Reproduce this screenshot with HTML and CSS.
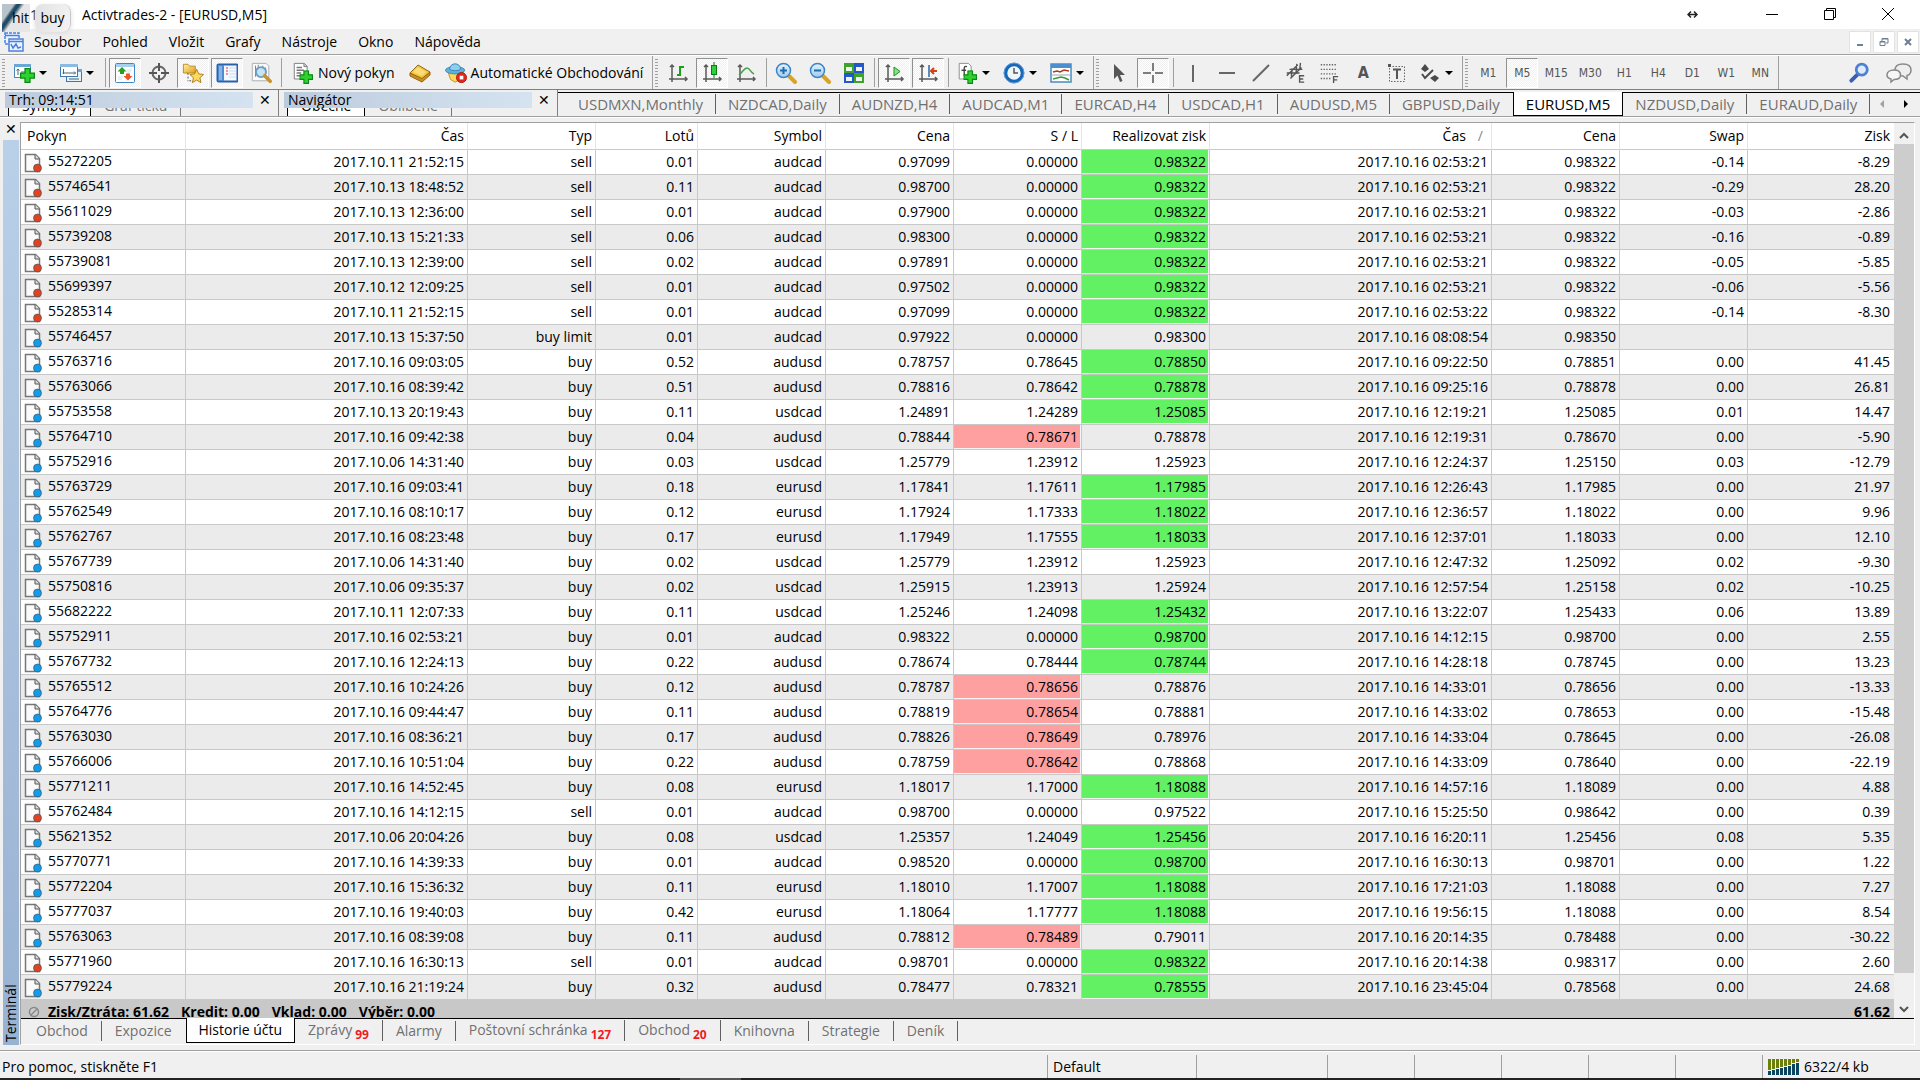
FILE: index.html
```html
<!DOCTYPE html>
<html lang="cs">
<head>
  <meta charset="UTF-8">
  <meta name="viewport" content="width=device-width, initial-scale=1.0">
  <title>Activtrades-2 - [EURUSD,M5]</title>
  <link rel="stylesheet" href="styles.css">
</head>
<body>
  <svg class="sprite" aria-hidden="true">
    <defs>
      <linearGradient id="gold" x1="0" y1="0" x2="1" y2="1"><stop offset="0" stop-color="#fff0a0"/><stop offset="1" stop-color="#e0a020"/></linearGradient>
      <linearGradient id="sky" x1="0" y1="0" x2="0" y2="1"><stop offset="0" stop-color="#e4f3fc"/><stop offset="1" stop-color="#9ccbee"/></linearGradient>
    </defs>
    <symbol id="i-plus" viewBox="0 0 12 12"><path d="M4 .5h4V4h3.500v4H8v3.500H4V8H.5V4H4z" fill="#2fd12f" stroke="#0a8a14"/></symbol>
    <symbol id="i-axes" viewBox="0 0 22 22"><path d="M5 3v17M2 17h18M3 5l2-2 2 2M18 15l2 2-2 2" fill="none" stroke="#5a5a5a" stroke-width="1.500"/></symbol>

    <symbol id="i-newchart" viewBox="0 0 22 22">
      <rect x="1.500" y="2.500" width="16" height="13" fill="#fff" stroke="#4a86b8"/><path d="M1 2h17v3H1z" fill="#6aa7d6"/>
      <path d="M5 7v6M3.500 8.500L5 7l1.500 1.500M8 10h5" stroke="#467" fill="none"/>
      <use href="#i-plus" x="7" y="6" width="15" height="15"/>
    </symbol>
    <symbol id="i-profiles" viewBox="0 0 22 22">
      <rect x="6.500" y="7.500" width="15" height="12" fill="#e8f2fa" stroke="#3f78ad"/><path d="M6 7h16v3H6z" fill="#6aa7d6"/>
      <rect x=".5" y="2.500" width="17" height="12" fill="#fff" stroke="#3f78ad"/><path d="M0 2h18v3H0z" fill="#8abce2"/>
      <path d="M3.500 7v5M2.500 11h13M14 9.500l1.500 1.500-1.500 1.500M9 17h10" stroke="#467" fill="none"/>
    </symbol>
    <symbol id="i-market" viewBox="0 0 22 22">
      <rect x="1.500" y="1.500" width="19" height="19" rx="1" fill="#fff" stroke="#3f87c2"/><path d="M2 2h18v3H2z" fill="#a6d0ee"/>
      <path d="M13 8h5M13 10h4M4 15h5M4 17h4" stroke="#cfe0ee"/>
      <path d="M8 5l4.500 4.500H10V12H6V9.500H3.500z" fill="#22a022"/><path d="M14 18.500L9.500 14H12v-2.500h4V14h2.500z" fill="#ee5522"/>
    </symbol>
    <symbol id="i-target" viewBox="0 0 22 22"><circle cx="11" cy="11" r="6.500" fill="none" stroke="#666" stroke-width="2"/><path d="M11 1v8M11 13v8M1 11h8M13 11h8" stroke="#555" stroke-width="2"/></symbol>
    <symbol id="i-folder" viewBox="0 0 24 24">
      <path d="M1.500 12V2.500h5l2 2h6V12z" fill="url(#gold)" stroke="#b98a1c"/><path d="M6.500 12v9M8 20.500h5" stroke="#444" stroke-dasharray="2 2" fill="none"/>
      <path d="M16 8l2.200 5 5.300.6-4 3.600 1.200 5.300-4.700-2.800-4.700 2.800 1.200-5.300-4-3.600 5.300-.6z" fill="#ffd95a" stroke="#a8781c"/>
    </symbol>
    <symbol id="i-panel" viewBox="0 0 22 22">
      <rect x="1.500" y="2.500" width="20" height="17" rx="1" fill="#f4f9ff" stroke="#2a62ae" stroke-width="2"/><path d="M2 3h6v16H2z" fill="#4d8ad0"/><path d="M3 4h3v14H3z" fill="#86b4e6"/>
      <path d="M10 6h2M10 9h2M10 12h2" stroke="#d33"/><path d="M13 6h7M13 9h7M13 12h7M13 15h7" stroke="#cdddee"/>
    </symbol>
    <symbol id="i-tester" viewBox="0 0 24 24">
      <path d="M2.500 1.500h15l3 3v16h-18z" fill="#fafafa" stroke="#aaa"/><path d="M6 4v12M9 3v5M14 4v4M17 6v4" stroke="#777"/>
      <circle cx="12" cy="11" r="5.500" fill="#b9dcf4" fill-opacity=".8" stroke="#6a9cc4" stroke-width="2"/><path d="M16 15l6 6" stroke="#c8942a" stroke-width="4" stroke-linecap="round"/>
    </symbol>
    <symbol id="i-order" viewBox="0 0 22 24">
      <path d="M1.500 1.500h11l3 3v14h-14z" fill="#fff" stroke="#777"/><path d="M12 1.500v3.500h3.500" fill="#ccc" stroke="#777"/><path d="M4 6h6M4 9h8M4 12h5M4 15h4" stroke="#777" stroke-width="1.500"/>
      <use href="#i-plus" x="7" y="9" width="15" height="15"/>
    </symbol>
    <symbol id="i-book" viewBox="0 0 22 22">
      <path d="M1 11L9 3l12 7-8 9.500z" fill="#f2c545" stroke="#94650f"/><path d="M1 11l12 5.500 8-6.500v3l-8 7L1 14z" fill="#c98f22" stroke="#94650f"/><path d="M9 5l8 5-4 4-9-4z" fill="#ffe58a" opacity=".7"/>
    </symbol>
    <symbol id="i-robot" viewBox="0 0 24 24">
      <path d="M3 10h17l-3 9-6 3-5-3z" fill="#ffd75e" stroke="#c1901e"/><ellipse cx="11" cy="9" rx="10.500" ry="4" fill="#5fb1dd" stroke="#3785b5"/><path d="M5 8c0-8 12-8 12 0-2 2-10 2-12 0z" fill="#8dcdef" stroke="#3785b5"/>
      <circle cx="18" cy="17" r="5.500" fill="#e02818" stroke="#a81a10"/><rect x="16" y="15" width="4" height="4" fill="#fff"/>
    </symbol>
    <symbol id="i-bars" viewBox="0 0 22 22"><use href="#i-axes"/><path d="M13 4v10M13 5h4M10 13h3" stroke="#18a018" stroke-width="2" fill="none"/></symbol>
    <symbol id="i-candle" viewBox="0 0 22 22"><use href="#i-axes"/><path d="M13 0v16" stroke="#0b7a18"/><rect x="10.500" y="3.500" width="5" height="9" fill="#2fcf3a" stroke="#0b7a18"/></symbol>
    <symbol id="i-line" viewBox="0 0 22 22"><use href="#i-axes"/><path d="M4 13C8 10 9 6 12 6s3 4 7 6" stroke="#46a046" stroke-width="1.500" fill="none"/></symbol>
    <symbol id="i-zoomin" viewBox="0 0 22 22">
      <path d="M14 14l6 6" stroke="#d9a423" stroke-width="4" stroke-linecap="round"/><circle cx="8.500" cy="8.500" r="7" fill="url(#sky)" stroke="#3d84c6" stroke-width="1.500"/><path d="M5 8.500h7M8.500 5v7" stroke="#236aa8" stroke-width="2"/>
    </symbol>
    <symbol id="i-zoomout" viewBox="0 0 22 22">
      <path d="M14 14l6 6" stroke="#d9a423" stroke-width="4" stroke-linecap="round"/><circle cx="8.500" cy="8.500" r="7" fill="url(#sky)" stroke="#3d84c6" stroke-width="1.500"/><path d="M5 8.500h7" stroke="#236aa8" stroke-width="2"/>
    </symbol>
    <symbol id="i-tile" viewBox="0 0 22 22">
      <path d="M1 1h10v10H1zM11 11h10v10H11z" fill="#3fa32a"/><path d="M11 1h10v10H11zM1 11h10v10H1z" fill="#2458c8"/>
      <path d="M3 5h6v4H3zM13 5h6v4h-6zM3 15h6v4H3zM13 15h6v4h-6z" fill="#eef5f0"/>
    </symbol>
    <symbol id="i-scroll" viewBox="0 0 22 22"><use href="#i-axes"/><path d="M11 5l6 4.500-6 4.500z" fill="#8ee08e" stroke="#189018"/></symbol>
    <symbol id="i-shift" viewBox="0 0 22 22"><use href="#i-axes"/><path d="M12 3v12" stroke="#2a6aa0" stroke-width="1.500"/><path d="M20 9h-5M17 6l-3 3 3 3" stroke="#d04414" stroke-width="2" fill="none"/></symbol>
    <symbol id="i-indicator" viewBox="0 0 22 24">
      <path d="M2.500 1.500h10l3 3v14h-13z" fill="#fff" stroke="#888"/><path d="M11 5c-4-1-3 2-3 10M5 9h5" stroke="#444" stroke-width="1.500" fill="none"/>
      <use href="#i-plus" x="7" y="9" width="15" height="15"/>
    </symbol>
    <symbol id="i-clock" viewBox="0 0 22 22"><circle cx="11" cy="11" r="8.500" fill="#eef5fb" stroke="#1a66b8" stroke-width="3.500"/><circle cx="11" cy="11" r="10" fill="none" stroke="#5ba0e0"/><path d="M11 6v5h4" stroke="#555" stroke-width="1.500" fill="none"/></symbol>
    <symbol id="i-template" viewBox="0 0 22 22">
      <rect x="1" y="2" width="20" height="18" fill="#fff" stroke="#4a8ac4" stroke-width="1.500"/><path d="M1 2h20v4H1z" fill="#4a8fd0"/><path d="M2 13h18" stroke="#8ab"/>
      <path d="M3 10l4-1 3 1 4-2 5 1" stroke="#b03a1a" stroke-width="1.500" fill="none"/><path d="M3 17l4-1 4-1 4 1 4 2" stroke="#3a9a3a" stroke-width="1.500" fill="none"/>
    </symbol>
    <symbol id="i-cursor" viewBox="0 0 22 22"><path d="M6 2v15l3.500-3.500L12 20l2.500-1-2.500-6h5z" fill="#555"/></symbol>
    <symbol id="i-cross" viewBox="0 0 22 22"><path d="M11 1v8M11 13v8M1 11h8M13 11h8" stroke="#555" stroke-width="1.500"/></symbol>
    <symbol id="i-vline" viewBox="0 0 22 22"><path d="M11 3v17" stroke="#666" stroke-width="2"/></symbol>
    <symbol id="i-hline" viewBox="0 0 22 22"><path d="M3 11h16" stroke="#666" stroke-width="2"/></symbol>
    <symbol id="i-trend" viewBox="0 0 22 22"><path d="M3 19L19 3" stroke="#666" stroke-width="2"/></symbol>
    <symbol id="i-channel" viewBox="0 0 22 24"><path d="M2 15L14 3M6 18L18 6M2 12h14M5 8h14M7 16l1-9M12 13l1-11M16 9l1-8" stroke="#555" stroke-width="1.500"/><path d="M21 15h-5v7h5M16 18.500h4" stroke="#555" stroke-width="1.500" fill="none"/></symbol>
    <symbol id="i-fibo" viewBox="0 0 22 24"><path d="M2 3h18M2 8h18M2 13h18M2 18h12" stroke="#666" stroke-dasharray="1.500 1.500" stroke-width="1.500"/><path d="M16 23v-7h5M16 19.500h4" stroke="#555" stroke-width="1.500" fill="none"/></symbol>
    <symbol id="i-label" viewBox="0 0 22 22"><rect x="3.500" y="4.500" width="15" height="15" fill="none" stroke="#666" stroke-dasharray="1.500 1.500"/><path d="M7 7.500h8M11 7.500V17" stroke="#555" stroke-width="2"/><path d="M2 2h3v3H2z" fill="#555"/></symbol>
    <symbol id="i-shapes" viewBox="0 0 22 22"><path d="M6 2l4 5-4 3-4-3zM16 13l4 3-4 4-5-4z" fill="#4a4a4a"/><path d="M3 12l3 4 8-8" stroke="#4a4a4a" stroke-width="2" fill="none"/></symbol>
    <symbol id="i-search" viewBox="0 0 20 20"><path d="M9 11l-6 6" stroke="#3a5fae" stroke-width="3.500" stroke-linecap="round"/><circle cx="12.500" cy="7" r="5" fill="#dcecfa" stroke="#4f7fd0" stroke-width="2.500"/></symbol>
    <symbol id="i-chat" viewBox="0 0 26 22"><path d="M17 2c5 0 8 2 8 6s-2 5-4 5.500V17l-4-3c-5 0-8-2-8-6s3-6 8-6z" fill="#eee" stroke="#888" stroke-width="1.500"/><path d="M8 8c4 0 6.500 2 6.500 5S12 17.500 8 17.500L5 20v-3c-2-.5-4-2-4-4 0-3 3-5 7-5z" fill="#f6f6f6" stroke="#888" stroke-width="1.500"/></symbol>
    <symbol id="i-doc" viewBox="0 0 18 20"><path d="M1.500 1.500h10l4 4v13h-14z" fill="#fafafa" stroke="#777" stroke-width="1.500"/><path d="M11 1.500V6h4.500" fill="#ddd" stroke="#555"/><circle cx="13.500" cy="15" r="4" fill="currentColor" stroke="#33506a" stroke-opacity=".6"/></symbol>
    <symbol id="i-app" viewBox="0 0 20 20"><g fill="#eaf3ff" stroke="#4a80dc" stroke-width="1.500"><rect x="1" y="1" width="14" height="11" stroke-dasharray="3 1"/><path d="M1 3.500h14"/><rect x="5" y="7" width="14" height="12"/><path d="M5 9.500h14M7 12l2 4 3-4 2 4 3-1" fill="none"/></g></symbol>
  </svg>

  <header class="titlebar">
    <div class="title"><span class="mark">1</span><span>Activtrades-2 - [EURUSD,M5]</span></div>
    <span class="drag-tip tip-hit">hit</span>
    <span class="drag-tip tip-buy">buy</span>
    <div class="window-buttons">
      <svg class="resize" viewBox="0 0 11 9"><path d="M1 4.500h9M4 1.500l-3 3 3 3M7 1.500l3 3-3 3" fill="none" stroke="#222" stroke-width="1.500"/></svg>
      <button aria-label="Minimalizovat"><svg viewBox="0 0 12 12"><path d="M0 6.500h12" stroke="#000"/></svg></button>
      <button aria-label="Obnovit"><svg viewBox="0 0 12 12"><path d="M.5 2.500h9v9h-9zM2.500 2.500v-2h9v9h-2" fill="none" stroke="#000"/></svg></button>
      <button aria-label="Zavřít"><svg viewBox="0 0 12 12"><path d="M0 0l12 12M12 0L0 12" stroke="#000"/></svg></button>
    </div>
  </header>

  <nav class="menubar">
    <svg class="app-icon"><use href="#i-app"/></svg>
    <button>Soubor</button>
    <button>Pohled</button>
    <button>Vložit</button>
    <button>Grafy</button>
    <button>Nástroje</button>
    <button>Okno</button>
    <button>Nápověda</button>
    <div class="mdi-buttons">
      <button aria-label="Minimalizovat graf"><svg viewBox="0 0 10 10"><path d="M2 8h6" stroke="#6d7f92" stroke-width="2"/></svg></button>
      <button aria-label="Obnovit graf"><svg viewBox="0 0 10 10"><path d="M1 4.500h5v4H1zM3 4V1.500h6V6H7M3 2h6M1 5h5" fill="none" stroke="#6d7f92"/></svg></button>
      <button aria-label="Zavřít graf"><svg viewBox="0 0 10 10"><path d="M2 2l6 6M8 2L2 8" stroke="#6d7f92" stroke-width="2"/></svg></button>
    </div>
  </nav>

  <div class="toolbar">
    <div class="group">
      <i class="grip"></i>
      <button class="drop" aria-label="Nový graf"><svg><use href="#i-newchart"/></svg></button>
      <button class="drop" aria-label="Profily"><svg><use href="#i-profiles"/></svg></button>
      <i class="sep"></i>
      <button class="on" aria-label="Sledování trhu"><svg><use href="#i-market"/></svg></button>
      <button aria-label="Datové okno"><svg><use href="#i-target"/></svg></button>
      <button class="on" aria-label="Navigátor"><svg><use href="#i-folder"/></svg></button>
      <button class="on" aria-label="Terminál"><svg><use href="#i-panel"/></svg></button>
      <button aria-label="Tester strategií"><svg><use href="#i-tester"/></svg></button>
      <i class="sep"></i>
      <button class="wide"><svg><use href="#i-order"/></svg>Nový pokyn</button>
      <button aria-label="MetaEditor"><svg><use href="#i-book"/></svg></button>
      <button class="wide"><svg><use href="#i-robot"/></svg>Automatické Obchodování</button>
    </div>
    <div class="group">
      <i class="grip"></i>
      <button aria-label="Sloupcový graf"><svg><use href="#i-bars"/></svg></button>
      <button class="on" aria-label="Svíčky"><svg><use href="#i-candle"/></svg></button>
      <button aria-label="Čárový graf"><svg><use href="#i-line"/></svg></button>
      <i class="sep"></i>
      <button aria-label="Přiblížit"><svg><use href="#i-zoomin"/></svg></button>
      <button aria-label="Oddálit"><svg><use href="#i-zoomout"/></svg></button>
      <button aria-label="Uspořádat okna"><svg><use href="#i-tile"/></svg></button>
      <i class="sep"></i>
      <button class="on" aria-label="Automatický posun"><svg><use href="#i-scroll"/></svg></button>
      <button class="on" aria-label="Odsazení grafu"><svg><use href="#i-shift"/></svg></button>
      <i class="sep"></i>
      <button class="drop" aria-label="Indikátory"><svg><use href="#i-indicator"/></svg></button>
      <button class="drop" aria-label="Periody"><svg><use href="#i-clock"/></svg></button>
      <button class="drop" aria-label="Šablony"><svg><use href="#i-template"/></svg></button>
    </div>
    <div class="group">
      <i class="grip"></i>
      <button aria-label="Kurzor"><svg><use href="#i-cursor"/></svg></button>
      <button class="on" aria-label="Zaměřovač"><svg><use href="#i-cross"/></svg></button>
      <i class="sep"></i>
      <button aria-label="Svislá čára"><svg><use href="#i-vline"/></svg></button>
      <button aria-label="Vodorovná čára"><svg><use href="#i-hline"/></svg></button>
      <button aria-label="Trendová čára"><svg><use href="#i-trend"/></svg></button>
      <button aria-label="Kanál"><svg><use href="#i-channel"/></svg></button>
      <button aria-label="Fibonacci"><svg><use href="#i-fibo"/></svg></button>
      <button class="letter" aria-label="Text">A</button>
      <button aria-label="Textový popisek"><svg><use href="#i-label"/></svg></button>
      <button class="drop" aria-label="Šipky"><svg><use href="#i-shapes"/></svg></button>
    </div>
    <div class="group periods">
      <i class="grip"></i>
      <button>M1</button>
      <button class="on">M5</button>
      <button>M15</button>
      <button>M30</button>
      <button>H1</button>
      <button>H4</button>
      <button>D1</button>
      <button>W1</button>
      <button>MN</button>
    </div>
    <div class="tools-right">
      <button aria-label="Hledat"><svg><use href="#i-search"/></svg></button>
      <button aria-label="Zprávy"><svg class="chat"><use href="#i-chat"/></svg></button>
    </div>
  </div>

  <div class="docks">
    <section class="dock">
      <div class="dock-head"><h2>Trh: 09:14:51</h2><button aria-label="Zavřít Trh">✕</button></div>
      <div class="dock-tabs"><span class="active">Symboly</span><span>Graf ticků</span></div>
    </section>
    <section class="dock">
      <div class="dock-head"><h2>Navigátor</h2><button aria-label="Zavřít Navigátor">✕</button></div>
      <div class="dock-tabs"><span class="active">Obecné</span><span>Oblíbené</span></div>
    </section>
    <nav class="tabs chart-tabs">
      <button>USDMXN,Monthly</button>
      <button>NZDCAD,Daily</button>
      <button>AUDNZD,H4</button>
      <button>AUDCAD,M1</button>
      <button>EURCAD,H4</button>
      <button>USDCAD,H1</button>
      <button>AUDUSD,M5</button>
      <button class="before">GBPUSD,Daily</button>
      <button class="active">EURUSD,M5</button>
      <button>NZDUSD,Daily</button>
      <button>EURAUD,Daily</button>
      <div class="tab-arrows">
        <button class="left off" aria-label="Předchozí karty"></button>
        <button class="right" aria-label="Další karty"></button>
      </div>
    </nav>
  </div>

  <main class="terminal">
    <div class="side">
      <button aria-label="Zavřít Terminál">✕</button>
      <h2>Terminál</h2>
    </div>
    <div class="pane">
      <div class="history">
        <div class="rows">
          <table>
            <colgroup>
              <col class="c-order"><col class="c-time"><col class="c-num"><col class="c-lots"><col class="c-num"><col class="c-num">
              <col class="c-num"><col class="c-num"><col class="c-time"><col class="c-num"><col class="c-num"><col>
            </colgroup>
            <thead>
              <tr><th>Pokyn</th><th>Čas</th><th>Typ</th><th>Lotů</th><th>Symbol</th><th>Cena</th><th>S / L</th><th>Realizovat zisk</th><th>Čas<span class="sort">∕</span></th><th>Cena</th><th>Swap</th><th>Zisk</th></tr>
            </thead>
            <tbody id="orders"></tbody>
            <tfoot>
              <tr><td colspan="11"><div class="total"><svg class="none" viewBox="0 0 12 12"><circle cx="6" cy="6" r="4.500" fill="#ccc" stroke="#888" stroke-width="1.500"/><path d="M3 9l6-6" stroke="#888" stroke-width="1.500"/></svg><span>Zisk/Ztráta: 61.62</span><span>Kredit: 0.00</span><span>Vklad: 0.00</span><span>Výběr: 0.00</span></div></td><td>61.62</td></tr>
            </tfoot>
          </table>
        </div>
        <div class="scrollbar">
          <button aria-label="Nahoru"><svg viewBox="0 0 10 7"><path d="M1 6l4-4 4 4" fill="none" stroke="#555" stroke-width="2"/></svg></button>
          <div class="thumb"></div>
          <button aria-label="Dolů"><svg viewBox="0 0 10 7"><path d="M1 1l4 4 4-4" fill="none" stroke="#555" stroke-width="2"/></svg></button>
        </div>
      </div>
      <nav class="tabs">
        <button>Obchod</button>
        <button class="before">Expozice</button>
        <button class="active">Historie účtu</button>
        <button>Zprávy<sub>99</sub></button>
        <button>Alarmy</button>
        <button>Poštovní schránka<sub>127</sub></button>
        <button>Obchod<sub>20</sub></button>
        <button>Knihovna</button>
        <button>Strategie</button>
        <button>Deník</button>
      </nav>
    </div>
  </main>

  <footer class="statusbar">
    <span class="help">Pro pomoc, stiskněte F1</span>
    <span class="s-profile">Default</span>
    <span class="s-wide"></span>
    <span class="s-cell"></span>
    <span class="s-cell"></span>
    <span class="s-cell"></span>
    <span class="s-cell"></span>
    <span class="s-cell"></span>
    <span class="s-net">
      <svg viewBox="0 0 32 16"><path d="M0 0h3v11H0zM4 0h3v10H4zM8 0h3v9H8zM12 0h3v8h-3zM16 0h3v7h-3zM20 0h3v6h-3zM24 0h3v4h-3zM28 0h3v3h-3z" fill="#6b7f0a"/><path d="M0 12h3v4H0zM4 11h3v5H4zM8 10h3v6H8zM12 9h3v7h-3zM16 8h3v8h-3zM20 7h3v9h-3zM24 5h3v11h-3zM28 4h3v12h-3z" fill="#0c4560"/></svg>
      6322/4 kb
    </span>
  </footer>
  <div class="taskbar"><i></i></div>

  <script src="orders.js"></script>
</body>
</html>
```
FILE: orders.js
```js
// order | open time | type | lots | symbol | price | S/L | T/P | close time | close price | swap | profit | hit (tp, sl)
const orders = `
55272205|2017.10.11 21:52:15|sell|0.01|audcad|0.97099|0.00000|0.98322|2017.10.16 02:53:21|0.98322|-0.14|-8.29|tp
55746541|2017.10.13 18:48:52|sell|0.11|audcad|0.98700|0.00000|0.98322|2017.10.16 02:53:21|0.98322|-0.29|28.20|tp
55611029|2017.10.13 12:36:00|sell|0.01|audcad|0.97900|0.00000|0.98322|2017.10.16 02:53:21|0.98322|-0.03|-2.86|tp
55739208|2017.10.13 15:21:33|sell|0.06|audcad|0.98300|0.00000|0.98322|2017.10.16 02:53:21|0.98322|-0.16|-0.89|tp
55739081|2017.10.13 12:39:00|sell|0.02|audcad|0.97891|0.00000|0.98322|2017.10.16 02:53:21|0.98322|-0.05|-5.85|tp
55699397|2017.10.12 12:09:25|sell|0.01|audcad|0.97502|0.00000|0.98322|2017.10.16 02:53:21|0.98322|-0.06|-5.56|tp
55285314|2017.10.11 21:52:15|sell|0.01|audcad|0.97099|0.00000|0.98322|2017.10.16 02:53:22|0.98322|-0.14|-8.30|tp
55746457|2017.10.13 15:37:50|buy limit|0.01|audcad|0.97922|0.00000|0.98300|2017.10.16 08:08:54|0.98350|||
55763716|2017.10.16 09:03:05|buy|0.52|audusd|0.78757|0.78645|0.78850|2017.10.16 09:22:50|0.78851|0.00|41.45|tp
55763066|2017.10.16 08:39:42|buy|0.51|audusd|0.78816|0.78642|0.78878|2017.10.16 09:25:16|0.78878|0.00|26.81|tp
55753558|2017.10.13 20:19:43|buy|0.11|usdcad|1.24891|1.24289|1.25085|2017.10.16 12:19:21|1.25085|0.01|14.47|tp
55764710|2017.10.16 09:42:38|buy|0.04|audusd|0.78844|0.78671|0.78878|2017.10.16 12:19:31|0.78670|0.00|-5.90|sl
55752916|2017.10.06 14:31:40|buy|0.03|usdcad|1.25779|1.23912|1.25923|2017.10.16 12:24:37|1.25150|0.03|-12.79|
55763729|2017.10.16 09:03:41|buy|0.18|eurusd|1.17841|1.17611|1.17985|2017.10.16 12:26:43|1.17985|0.00|21.97|tp
55762549|2017.10.16 08:10:17|buy|0.12|eurusd|1.17924|1.17333|1.18022|2017.10.16 12:36:57|1.18022|0.00|9.96|tp
55762767|2017.10.16 08:23:48|buy|0.17|eurusd|1.17949|1.17555|1.18033|2017.10.16 12:37:01|1.18033|0.00|12.10|tp
55767739|2017.10.06 14:31:40|buy|0.02|usdcad|1.25779|1.23912|1.25923|2017.10.16 12:47:32|1.25092|0.02|-9.30|
55750816|2017.10.06 09:35:37|buy|0.02|usdcad|1.25915|1.23913|1.25924|2017.10.16 12:57:54|1.25158|0.02|-10.25|
55682222|2017.10.11 12:07:33|buy|0.11|usdcad|1.25246|1.24098|1.25432|2017.10.16 13:22:07|1.25433|0.06|13.89|tp
55752911|2017.10.16 02:53:21|buy|0.01|audcad|0.98322|0.00000|0.98700|2017.10.16 14:12:15|0.98700|0.00|2.55|tp
55767732|2017.10.16 12:24:13|buy|0.22|audusd|0.78674|0.78444|0.78744|2017.10.16 14:28:18|0.78745|0.00|13.23|tp
55765512|2017.10.16 10:24:26|buy|0.12|audusd|0.78787|0.78656|0.78876|2017.10.16 14:33:01|0.78656|0.00|-13.33|sl
55764776|2017.10.16 09:44:47|buy|0.11|audusd|0.78819|0.78654|0.78881|2017.10.16 14:33:02|0.78653|0.00|-15.48|sl
55763030|2017.10.16 08:36:21|buy|0.17|audusd|0.78826|0.78649|0.78976|2017.10.16 14:33:04|0.78645|0.00|-26.08|sl
55766006|2017.10.16 10:51:04|buy|0.22|audusd|0.78759|0.78642|0.78868|2017.10.16 14:33:09|0.78640|0.00|-22.19|sl
55771211|2017.10.16 14:52:45|buy|0.08|eurusd|1.18017|1.17000|1.18088|2017.10.16 14:57:16|1.18089|0.00|4.88|tp
55762484|2017.10.16 14:12:15|sell|0.01|audcad|0.98700|0.00000|0.97522|2017.10.16 15:25:50|0.98642|0.00|0.39|
55621352|2017.10.06 20:04:26|buy|0.08|usdcad|1.25357|1.24049|1.25456|2017.10.16 16:20:11|1.25456|0.08|5.35|tp
55770771|2017.10.16 14:39:33|buy|0.01|audcad|0.98520|0.00000|0.98700|2017.10.16 16:30:13|0.98701|0.00|1.22|tp
55772204|2017.10.16 15:36:32|buy|0.11|eurusd|1.18010|1.17007|1.18088|2017.10.16 17:21:03|1.18088|0.00|7.27|tp
55777037|2017.10.16 19:40:03|buy|0.42|eurusd|1.18064|1.17777|1.18088|2017.10.16 19:56:15|1.18088|0.00|8.54|tp
55763063|2017.10.16 08:39:08|buy|0.11|audusd|0.78812|0.78489|0.79011|2017.10.16 20:14:35|0.78488|0.00|-30.22|sl
55771960|2017.10.16 16:30:13|sell|0.01|audcad|0.98701|0.00000|0.98322|2017.10.16 20:14:38|0.98317|0.00|2.60|tp
55779224|2017.10.16 21:19:24|buy|0.32|audusd|0.78477|0.78321|0.78555|2017.10.16 23:45:04|0.78568|0.00|24.68|tp
`.trim().split("\n").map(line => line.split("|"));

document.getElementById("orders").innerHTML = orders.map(row => {
  const hit = row[12];
  const side = row[2] === "sell" ? "sell" : "buy";
  return "<tr>" + row.slice(0, 12).map((value, i) => {
    if (i === 0) return `<td><svg class="doc ${side}"><use href="#i-doc"/></svg>${value}</td>`;
    if (i === 6 && hit === "sl") return `<td class="sl">${value}</td>`;
    if (i === 7 && hit === "tp") return `<td class="tp">${value}</td>`;
    return `<td>${value}</td>`;
  }).join("") + "</tr>";
}).join("");
```
FILE: styles.css
```css
* {
  box-sizing: border-box;
}
body {
  margin: 0;
  height: 100vh;
  display: flex;
  flex-direction: column;
  overflow: hidden;
  background: #f0f0f0;
  color: #000;
  font: 14px/20px "Open Sans", "Noto Sans", sans-serif;
}
button {
  margin: 0;
  padding: 0;
  border: none;
  background: none;
  color: inherit;
  font: inherit;
  white-space: nowrap;
}
h2 {
  margin: 0;
  font-size: 14px;
  font-weight: normal;
}
.sprite {
  position: absolute;
  width: 0;
  height: 0;
}

/* title bar */
.titlebar {
  position: relative;
  display: flex;
  justify-content: space-between;
  height: 29px;
  background: #fff;
}
.title {
  display: flex;
  gap: 44px;
  padding: 5px 0 0 30px;
}
.drag-tip {
  position: absolute;
  top: 4px;
  height: 28px;
  padding-top: 4px;
  text-align: center;
}
.tip-hit {
  left: 2px;
  width: 28px;
  padding-left: 9px;
  background: linear-gradient(125deg, #b9c4ca 0 25%, #234a66 32% 38%, #e6e6e6 48%);
}
.tip-buy {
  left: 35px;
  width: 36px;
  border-radius: 8px;
  background: linear-gradient(100deg, #e2e2e2, #f4f2f2);
  box-shadow: 0 2px 5px #ddd;
  border-right: 1px solid #c8c8c8;
}
.window-buttons {
  display: flex;
  align-items: center;
  padding-right: 3px;
}
.window-buttons button {
  width: 58px;
  height: 28px;
}
.window-buttons svg {
  width: 12px;
  height: 12px;
}
.window-buttons .resize {
  width: 11px;
  height: 9px;
  margin-right: 45px;
}

/* menu */
.menubar {
  display: flex;
  align-items: center;
  height: 26px;
  padding-left: 4px;
  border-bottom: 1px solid #a0a0a0;
}
.app-icon {
  width: 20px;
  height: 20px;
}
.menubar > button {
  padding: 0 11px 0 10px;
}
.mdi-buttons {
  display: flex;
  gap: 2px;
  margin-left: auto;
  padding-right: 1px;
}
.mdi-buttons button {
  width: 22px;
  height: 22px;
  border: 1px solid #e3e3e3;
  background: #fff;
}
.mdi-buttons svg {
  width: 10px;
  height: 10px;
}

/* toolbar */
.toolbar {
  display: flex;
  height: 35px;
  border-top: 1px solid #fff;
  border-bottom: 1px solid #808080;
}
.group {
  display: flex;
  align-items: center;
  gap: 2px;
  padding: 0 2px;
  border-right: 1px solid #a0a0a0;
}
.grip {
  width: 3px;
  height: 28px;
  margin-right: 2px;
  background: repeating-linear-gradient(#a0a0a0 0 1px, #f0f0f0 1px 3px);
}
.sep {
  width: 1px;
  height: 29px;
  margin: 0 1px 0 2px;
  background: #a0a0a0;
}
.toolbar button {
  display: flex;
  align-items: center;
  justify-content: center;
  width: 32px;
  height: 30px;
  border: 1px solid transparent;
}
.toolbar svg {
  flex: none;
  width: 22px;
  height: 22px;
}
.toolbar .on {
  border-color: #909090 #fff #fff #909090;
  background: repeating-conic-gradient(#f0f0f0 0 25%, #fff 0 50%) 0 0 / 2px 2px;
}
.toolbar .drop {
  width: 45px;
  justify-content: flex-start;
  gap: 4px;
  padding-left: 3px;
}
.drop::after {
  content: "";
  border: 4px solid transparent;
  border-top-color: #000;
  border-bottom: none;
}
.toolbar .wide {
  width: auto;
  gap: 4px;
  padding: 0 6px;
}
.toolbar .letter {
  color: #555;
  font: bold 16px "DejaVu Sans Condensed", sans-serif;
}
.periods button {
  color: #555;
  font: 12px "DejaVu Sans Condensed", "DejaVu Sans", sans-serif;
}
.tools-right {
  display: flex;
  align-items: center;
  gap: 8px;
  margin-left: auto;
  padding-right: 5px;
}
.toolbar .chat {
  width: 28px;
}

/* market watch, navigator, chart tabs */
.docks {
  display: flex;
  height: 27px;
  border-bottom: 1px solid #a0a0a0;
}
.dock {
  width: 279px;
  padding: 2px 1px 0 5px;
  border-right: 1px solid #808080;
  overflow: hidden;
}
.dock-head {
  display: flex;
  height: 16px;
}
.dock-head h2 {
  flex: 1;
  padding-left: 4px;
  line-height: 16px;
  background: linear-gradient(90deg, #bccbdc, #d5e3f1);
}
.dock-head button {
  width: 24px;
  line-height: 16px;
}
.dock-tabs {
  display: flex;
  align-items: flex-end;
  height: 8px;
  padding-left: 3px;
  overflow: hidden;
  color: #777;
}
.dock-tabs span {
  padding: 0 13px;
  border-right: 1px solid #777;
}
.dock-tabs .active {
  border: solid #000;
  border-width: 0 1px;
  background: #fff;
  color: #000;
}
.tabs {
  display: flex;
  align-items: center;
  height: 26px;
  padding: 0 0 2px 2px;
  border-top: 1px solid #000;
  color: #707070;
}
.tabs > button {
  padding: 0 13px;
  border-right: 1px solid #606060;
}
.tabs > .before {
  border-right-color: transparent;
}
.tabs > .active {
  align-self: flex-start;
  height: 25px;
  margin-top: -1px;
  padding: 0 12px;
  border: solid #000;
  border-width: 0 1px 1px;
  background: #fff;
  color: #000;
}
.chart-tabs {
  flex: 1;
  height: 24px;
  margin-top: 2px;
  padding-left: 8px;
  font-size: 15px;
}
.chart-tabs > button {
  padding: 0 12px;
}
.chart-tabs > .active {
  height: 24px;
}
.tab-arrows {
  display: flex;
  gap: 20px;
  margin-left: auto;
  padding-right: 12px;
}
.tab-arrows button {
  border: 4px solid transparent;
}
.tab-arrows .left {
  border-left: none;
  border-right-color: #000;
}
.tab-arrows .right {
  border-right: none;
  border-left-color: #000;
}
.tab-arrows .off {
  border-right-color: #a0a0a0;
}

/* terminal */
.terminal {
  flex: 1;
  display: flex;
  min-height: 0;
  padding: 0 5px 5px 3px;
  border-top: 1px solid #fff;
}
.side {
  display: flex;
  flex-direction: column;
  width: 17px;
  padding-right: 1px;
}
.side button {
  height: 22px;
}
.side h2 {
  flex: 1;
  padding-top: 3px;
  line-height: 16px;
  writing-mode: vertical-rl;
  transform: rotate(180deg);
  background: linear-gradient(#98b2d2, #bacfe8);
}
.pane {
  flex: 1;
  display: flex;
  flex-direction: column;
  min-width: 0;
  margin-top: 4px;
  border: 1px solid #fff;
  border-top-color: #a0a0a0;
  border-left-color: #a0a0a0;
}
.history {
  flex: 1;
  display: flex;
  min-height: 0;
}
.rows {
  flex: 1;
  overflow: hidden;
  background: #fff;
}
table {
  width: 100%;
  table-layout: fixed;
  border-spacing: 0;
}
.c-order { width: 165px; }
.c-time { width: 282px; }
.c-num { width: 128px; }
.c-lots { width: 102px; }
th, td {
  height: 25px;
  padding: 0 3px;
  border: solid #c8c8c8;
  border-width: 0 1px 1px 0;
  text-align: right;
  white-space: nowrap;
}
th {
  height: 27px;
  border-right-color: #e5e5e5;
  font-weight: normal;
}
th:first-child {
  padding-left: 6px;
  text-align: left;
}
td:first-child {
  text-align: left;
}
td:last-child, th:last-child {
  padding-right: 4px;
  border-right: none;
}
tbody tr:nth-child(even) {
  background: #ebebeb;
}
.sort {
  margin: 0 5px 0 12px;
  color: #888;
}
.doc {
  width: 18px;
  height: 20px;
  margin-right: 6px;
  vertical-align: middle;
}
.buy { color: #149be8; }
.sell { color: #e2431c; }
.tp {
  background: #62f162;
  box-shadow: inset -1px -1px #f4f4f4;
}
.sl {
  background: #ffa0a0;
  box-shadow: inset -1px -1px #f4f4f4;
}
tfoot td {
  height: 23px;
  border: none;
  background: #c8c8c8;
  font-weight: bold;
}
.total {
  display: flex;
  align-items: center;
  gap: 12px;
}
.none {
  width: 12px;
  height: 12px;
  margin: 0 -4px 0 4px;
}
.scrollbar {
  display: flex;
  flex-direction: column;
  width: 20px;
}
.scrollbar button {
  height: 21px;
}
.scrollbar svg {
  width: 10px;
  height: 7px;
}
.thumb {
  flex: 1;
  margin-bottom: 24px;
  background: #cdcdcd;
}
sub {
  margin-left: 3px;
  color: #ed1c24;
  font: bold 12px/1 "Open Sans", sans-serif;
  vertical-align: -4px;
}

/* status bar */
.statusbar {
  display: flex;
  align-items: flex-end;
  height: 28px;
  border-top: 1px solid #a0a0a0;
  box-shadow: inset 0 1px #fff;
}
.statusbar span {
  display: flex;
  align-items: center;
  height: 23px;
  padding-left: 5px;
  border-left: 1px solid #a0a0a0;
}
.statusbar .help {
  flex: 1;
  padding-left: 2px;
  border: none;
}
.s-profile { width: 149px; }
.s-wide { width: 131px; }
.s-cell { width: 87px; }
.statusbar .s-net {
  width: 158px;
  gap: 4px;
}
.s-net svg {
  width: 32px;
  height: 16px;
}
.taskbar {
  height: 2px;
  background: #222;
}
.taskbar i {
  display: block;
  width: 61px;
  height: 2px;
  margin-left: 680px;
  background: #555;
}
```
